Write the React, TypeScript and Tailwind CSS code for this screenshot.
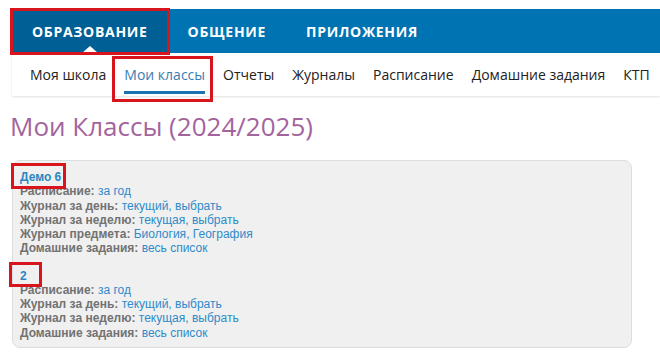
import React from 'react';

const topTabs = ['Образование', 'Общение', 'Приложения'];
const subTabs = ['Моя школа', 'Мои классы', 'Отчеты', 'Журналы', 'Расписание', 'Домашние задания', 'КТП'];

type Row = { label: string; links: string[] };

const classes: { name: string; rows: Row[]; boxClass: string }[] = [
  {
    name: 'Демо 6',
    boxClass: '-left-[9px] -right-[5px] -top-[7px] -bottom-[5px]',
    rows: [
      { label: 'Расписание:', links: ['за год'] },
      { label: 'Журнал за день:', links: ['текущий', 'выбрать'] },
      { label: 'Журнал за неделю:', links: ['текущая', 'выбрать'] },
      { label: 'Журнал предмета:', links: ['Биология', 'География'] },
      { label: 'Домашние задания:', links: ['весь список'] },
    ],
  },
  {
    name: '2',
    boxClass: '-left-[11px] -right-[15px] -top-[7px] -bottom-[4px]',
    rows: [
      { label: 'Расписание:', links: ['за год'] },
      { label: 'Журнал за день:', links: ['текущий', 'выбрать'] },
      { label: 'Журнал за неделю:', links: ['текущая', 'выбрать'] },
      { label: 'Домашние задания:', links: ['весь список'] },
    ],
  },
];

const App: React.FC = () => {
  return (
    <div className="w-[660px] h-[358px] bg-white overflow-hidden pt-[9px] font-['Open_Sans',sans-serif]">
      {/* Top navigation */}
      <div className="ml-[12px] h-[44px] bg-[#0073b2] flex">
        {topTabs.map((tab, i) => (
          <div
            key={tab}
            className={`relative px-5 flex items-center text-white font-bold text-[14px] uppercase tracking-[0.05em] ${
              i === 0 ? 'bg-[#005f95]' : ''
            }`}
          >
            {tab}
            {i === 0 && (
              <>
                <span className="absolute bottom-0 left-1/2 -translate-x-1/2 w-0 h-0 border-l-[8px] border-r-[8px] border-b-[7px] border-l-transparent border-r-transparent border-b-white" />
                <span className="absolute -left-[2px] -right-[2px] -top-[1px] -bottom-[2px] border-[3px] border-[#d8141c] pointer-events-none" />
              </>
            )}
          </div>
        ))}
      </div>

      {/* Sub navigation */}
      <div className="ml-[12px] h-[43px] bg-white flex items-center gap-[18px] pl-[18px] shadow-[0_1px_2px_rgba(0,0,0,0.12)] text-[14px] text-[#222]">
        {subTabs.map((tab) =>
          tab === 'Мои классы' ? (
            <div key={tab} className="relative h-full flex items-center text-[#3a7db3]">
              {tab}
              <span className="absolute left-0 right-0 bottom-[2px] h-[3px] bg-[#1a73b3]" />
              <span className="absolute -left-[12px] -right-[8px] top-[3px] -bottom-[6px] border-[3px] border-[#d8141c] pointer-events-none" />
            </div>
          ) : (
            <div key={tab} className="whitespace-nowrap">
              {tab}
            </div>
          )
        )}
      </div>

      {/* Title */}
      <h1 className="ml-[10px] mt-[13px] text-[26px] leading-[34px] text-[#a3649e]">Мои Классы (2024/2025)</h1>

      {/* Card */}
      <div className="ml-[12px] mt-[17px] w-[620px] bg-[#f0f0f0] border border-[#d9dee1] rounded-lg pt-[9px] pb-[7px] pl-[7px] font-['Liberation_Sans',Arial,sans-serif] text-[12px] leading-[14.25px]">
        {classes.map((c, ci) => (
          <div key={c.name} className={ci > 0 ? 'mt-[13px]' : ''}>
            <div>
              <span className="relative inline-block font-bold text-[#2b87c1]">
                {c.name}
                <span className={`absolute ${c.boxClass} border-[3px] border-[#d8141c] pointer-events-none`} />
              </span>
            </div>
            {c.rows.map((r) => (
              <div key={r.label}>
                <span className="font-bold text-[#727272]">{r.label}</span>{' '}
                {r.links.map((l, li) => (
                  <span key={l}>
                    <span className="text-[#2e8bc9]">{l}</span>
                    {li < r.links.length - 1 && <span className="text-[#2e8bc9]">, </span>}
                  </span>
                ))}
              </div>
            ))}
          </div>
        ))}
      </div>
    </div>
  );
};

export default App;
